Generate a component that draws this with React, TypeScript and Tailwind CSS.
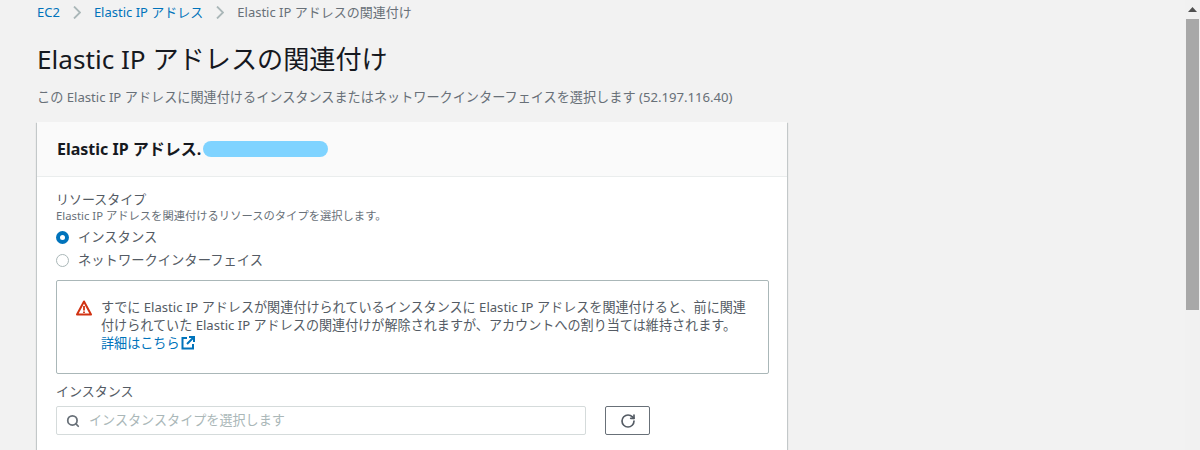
import React from "react";
import { RotateCw, Search } from "lucide-react";

const font = { fontFamily: '"Noto Sans", "Noto Sans CJK JP", sans-serif' };

const Chevron = () => (
  <svg className="mx-[13px] shrink-0" width="8" height="13" viewBox="0 0 8 13" fill="none">
    <path d="M1 0.5L7 6.5L1 12.5" stroke="#aab7b8" strokeWidth="1.8" />
  </svg>
);

const App: React.FC = () => {
  return (
    <div className="flex h-[450px] w-[1200px] overflow-hidden bg-[#f2f2f2] text-[#16191f]" style={font}>
      <div className="flex-1 min-w-0">
        {/* Breadcrumb */}
        <div className="ml-[37px] flex h-[25px] items-center text-[13px] text-[#687078]">
          <a className="text-[#0073bb]">EC2</a>
          <Chevron />
          <a className="text-[#0073bb]">Elastic IP アドレス</a>
          <Chevron />
          <span>Elastic IP アドレスの関連付け</span>
        </div>

        <h1 className="ml-[37px] mt-[16px] text-[26.15px] leading-[36px]">Elastic IP アドレスの関連付け</h1>
        <p className="ml-[37px] mt-[10px] text-[13.15px] leading-[20px] text-[#687078]">
          この Elastic IP アドレスに関連付けるインスタンスまたはネットワークインターフェイスを選択します (52.197.116.40)
        </p>

        {/* Card */}
        <div className="ml-[37px] mt-[15px] w-[750px] bg-white pb-[40px] shadow-[0_1px_1px_0_rgba(0,28,36,0.3),1px_1px_1px_0_rgba(0,28,36,0.15),-1px_1px_1px_0_rgba(0,28,36,0.15)]">
          <div className="flex h-[55px] items-center border-b border-[#eaeded] bg-[#fafafa] px-[20px]">
            <h2 className="relative text-[16px] font-bold">
              Elastic IP アドレス.
              <span className="absolute left-[146px] top-[4px] h-[16px] w-[125px] rounded-full bg-[#7fd3ff]" />
            </h2>
          </div>

          <div className="px-[19px] pt-[14px]">
            <div className="text-[13px] leading-[17px] text-[#545b64]">リソースタイプ</div>
            <div className="mt-[1px] text-[11.3px] leading-[14px] text-[#687078]">Elastic IP アドレスを関連付けるリソースのタイプを選択します。</div>

            <label className="mt-[3px] flex h-[23px] items-center gap-[9px] text-[13.3px] text-[#545b64]">
              <span className="flex h-[13px] w-[13px] items-center justify-center rounded-full bg-[#0073bb]">
                <span className="h-[5px] w-[5px] rounded-full bg-white" />
              </span>
              インスタンス
            </label>
            <label className="flex h-[23px] items-center gap-[9px] text-[13.3px] text-[#545b64]">
              <span className="h-[13px] w-[13px] rounded-full border border-[#aab7b8] bg-white" />
              ネットワークインターフェイス
            </label>

            {/* Warning */}
            <div className="mt-[8px] flex h-[94px] w-[713px] gap-[9px] rounded-[2px] border border-[#aab7b8] pl-[19px] pr-[16px] pt-[17px]">
              <svg className="mt-[2px] shrink-0" width="16" height="16" viewBox="0 0 16 16" fill="none">
                <path d="M8 1.5L15 14.5H1z" stroke="#d13212" strokeWidth="2" strokeLinejoin="round" />
                <path d="M8 6v4.5M8 11.5v1.5" stroke="#d13212" strokeWidth="1.8" />
              </svg>
              <div className="text-[13.1px] leading-[18px] text-[#545b64]">
                <p>
                  すでに Elastic IP アドレスが関連付けられているインスタンスに Elastic IP アドレスを関連付けると、前に関連付けられていた Elastic IP アドレスの関連付けが解除されますが、アカウントへの割り当ては維持されます。
                </p>
                <a className="inline-flex items-center text-[#0073bb]">
                  詳細はこちら
                  <svg className="ml-[1px]" width="14" height="14" viewBox="0 0 14 14" fill="none">
                    <path d="M6 2H1.5V12.5H12V8" stroke="#0073bb" strokeWidth="2" />
                    <path d="M8 1H13V6M13 1L6 8" stroke="#0073bb" strokeWidth="2" />
                  </svg>
                </a>
              </div>
            </div>

            <div className="mt-[7px] text-[13px] leading-[20px] text-[#545b64]">インスタンス</div>
            <div className="mt-[5px] flex items-center gap-[19px]">
              <div className="flex h-[29px] w-[530px] items-center gap-[9px] rounded-[2px] border border-[#d5dbdb] bg-white pl-[9px]">
                <Search className="h-[14px] w-[14px] text-[#687078]" strokeWidth={3} />
                <span className="text-[13.1px] text-[#aab7b8]">インスタンスタイプを選択します</span>
              </div>
              <button className="flex h-[29px] w-[45px] items-center justify-center rounded-[2px] border border-[#687078] bg-white">
                <RotateCw className="h-[16px] w-[16px] text-[#545b64]" strokeWidth={2.5} />
              </button>
            </div>
          </div>
        </div>
      </div>

      {/* Scrollbar */}
      <div className="flex w-[15px] shrink-0 flex-col items-center bg-[#f1f1f1]">
        <div className="flex h-[19px] items-center justify-center">
          <svg width="9" height="5" viewBox="0 0 9 5"><path d="M4.5 0L9 5H0z" fill="#505050" /></svg>
        </div>
        <div className="h-[291px] w-[13px] bg-[#a8a8a8]" />
      </div>
    </div>
  );
};

export default App;
